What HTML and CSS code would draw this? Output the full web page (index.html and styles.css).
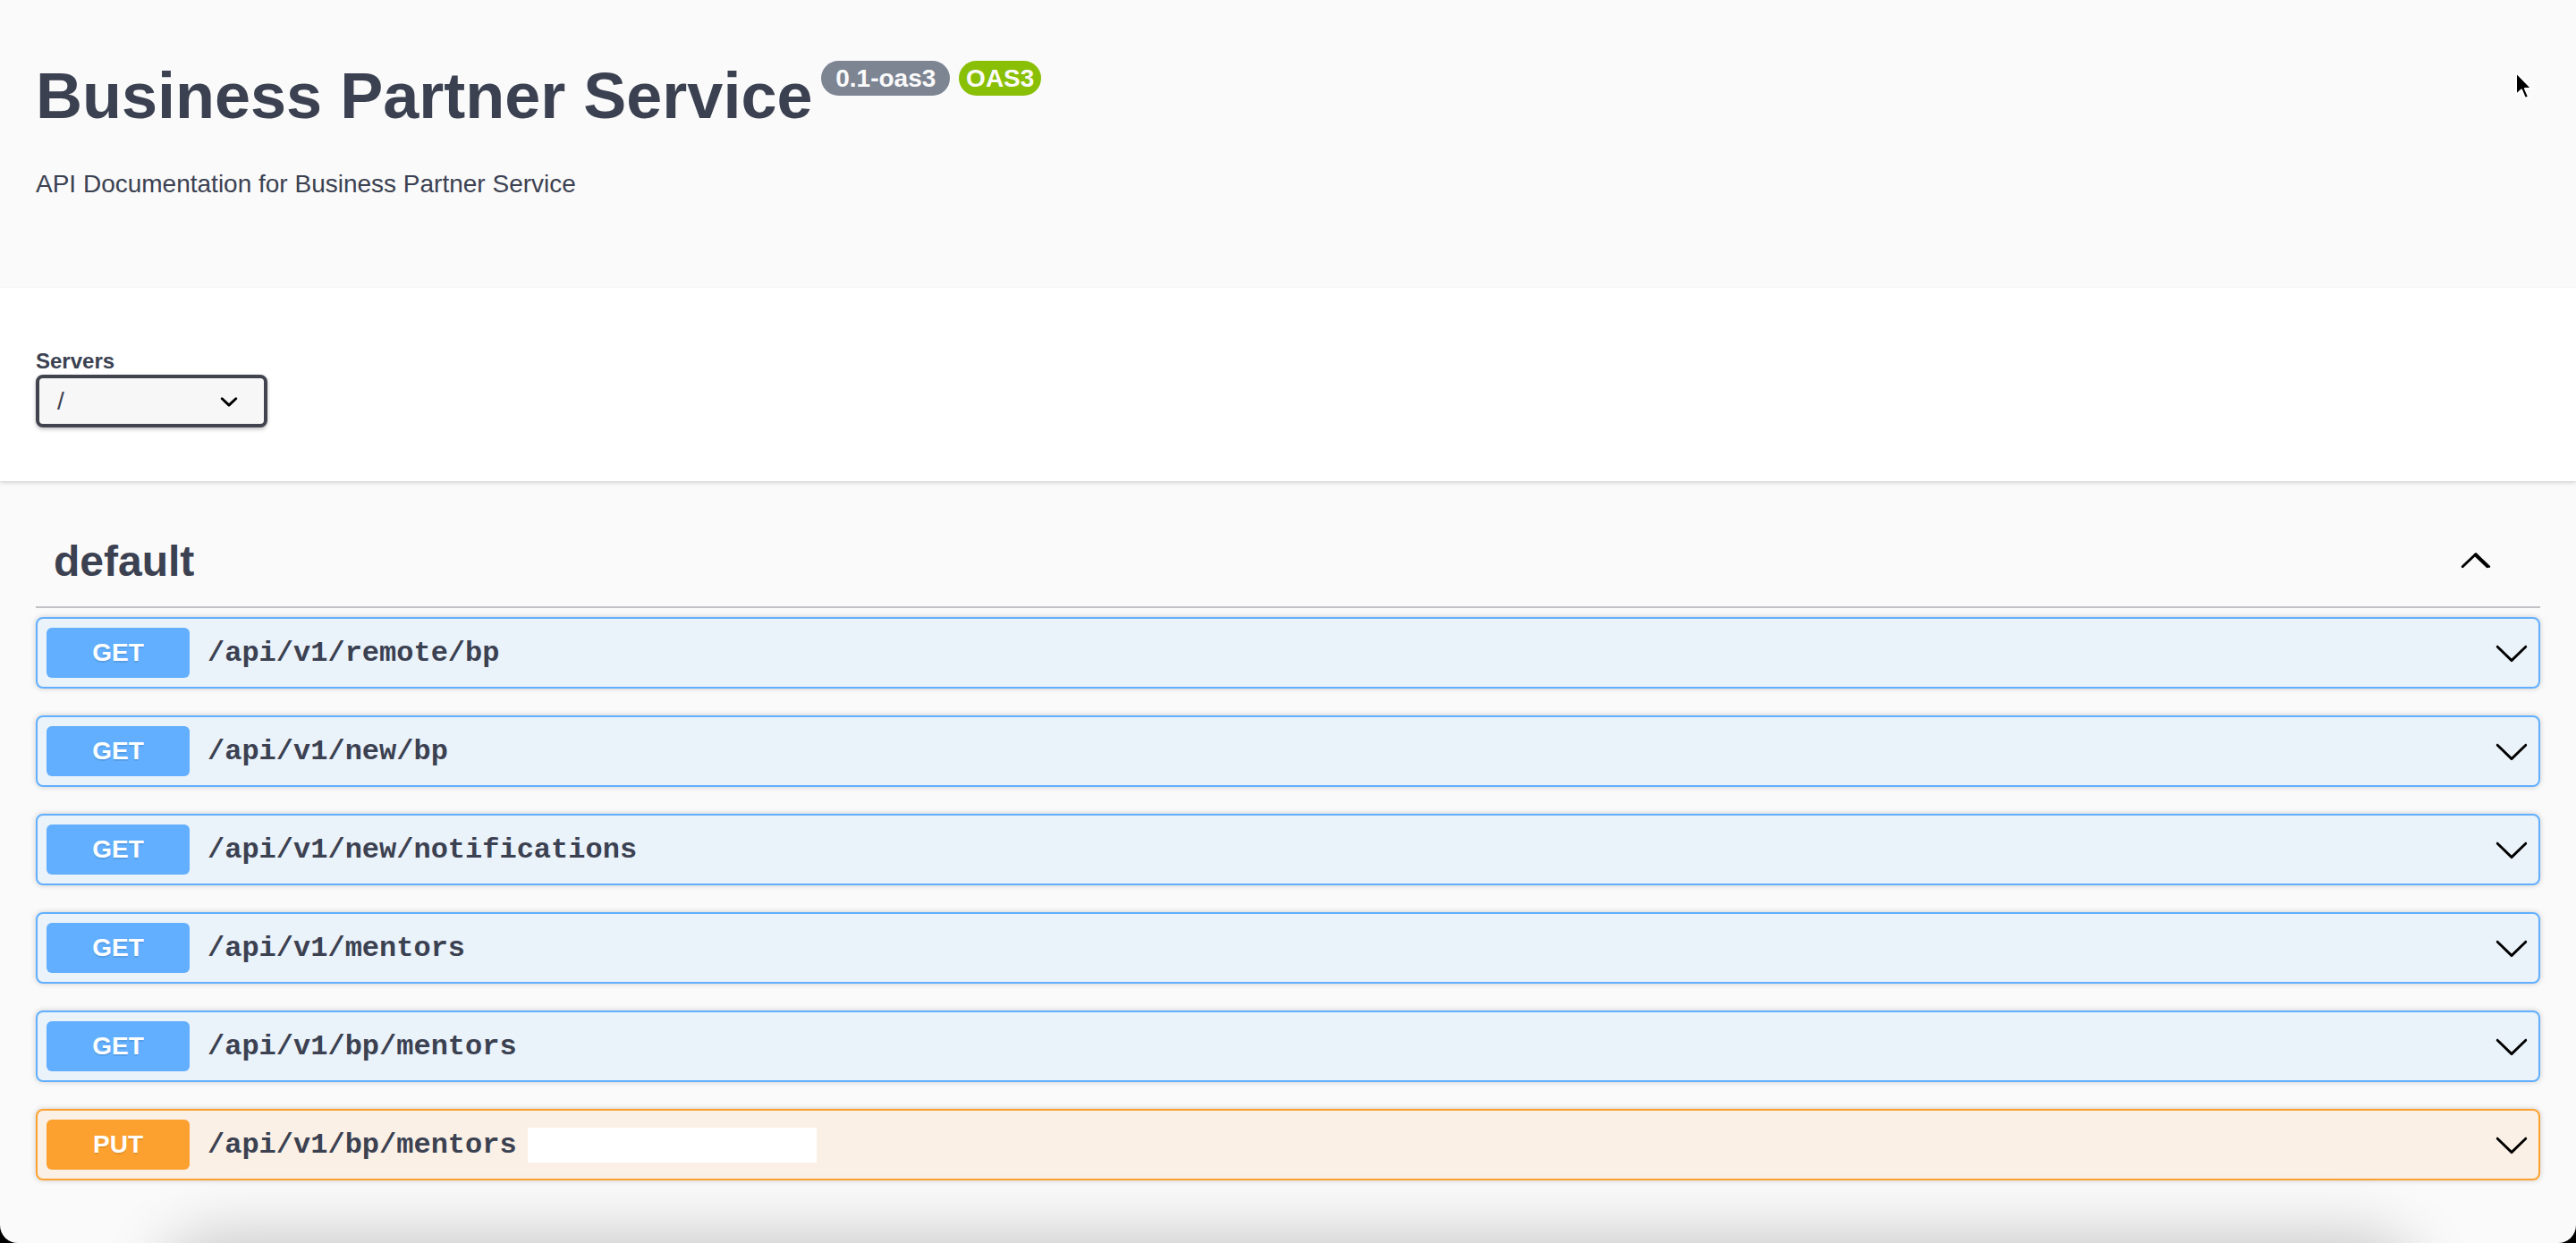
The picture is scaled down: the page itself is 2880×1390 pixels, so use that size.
FILE: index.html
```html
<!DOCTYPE html>
<html lang="en">
<head>
<meta charset="utf-8">
<title>Business Partner Service</title>
<link rel="stylesheet" href="styles.css">
</head>
<body>
<div class="window">
  <section class="info">
    <h2 class="title">
      <span class="title-text">Business Partner Service</span>
      <small class="badge badge-version"><span class="badge-text"> 0.1-oas3 </span></small>
      <small class="badge badge-stamp"><span class="badge-text">OAS3</span></small>
    </h2>
    <p class="description">API Documentation for Business Partner Service</p>
  </section>

  <section class="scheme">
    <div class="servers">
      <div class="servers-title">Servers</div>
      <div class="select">
        <span class="select-value">/</span>
        <svg class="select-arrow" viewBox="0 0 20 20" width="40" height="40" aria-hidden="true"><path d="M13.418 7.859a.695.695 0 0 1 .978 0 .68.68 0 0 1 0 .969l-3.908 3.83a.697.697 0 0 1-.979 0l-3.908-3.83a.68.68 0 0 1 0-.969.695.695 0 0 1 .978 0L10 11l3.418-3.141z"/></svg>
      </div>
    </div>
  </section>

  <section class="ops">
    <h3 class="tag">
      <span class="tag-name">default</span>
      <svg class="tag-arrow" viewBox="0 0 20 20" width="40" height="40" aria-hidden="true"><path d="M17.418 14.908c-.274.282-.657.305-.993 0L10 8.747l-6.425 6.161c-.336.305-.72.282-.993 0-.274-.282-.256-.757 0-1.007.256-.25 7.417-7.129 7.417-7.129a.696.696 0 0 1 .993 0s7.161 6.879 7.418 7.129c.256.25.274.725 0 1.007z"/></svg>
    </h3>

    <div class="opblock get">
      <span class="method">GET</span>
      <span class="path">/api/v1/remote/bp</span>
      <svg class="op-arrow" viewBox="0 0 20 20" width="40" height="40" aria-hidden="true"><path d="M17.418 6.109c.272-.268.709-.268.979 0s.271.701 0 .969l-7.908 7.83c-.27.268-.707.268-.979 0l-7.908-7.83c-.27-.268-.27-.701 0-.969.271-.268.709-.268.979 0L10 13.25l7.418-7.141z"/></svg>
    </div>
    <div class="opblock get">
      <span class="method">GET</span>
      <span class="path">/api/v1/new/bp</span>
      <svg class="op-arrow" viewBox="0 0 20 20" width="40" height="40" aria-hidden="true"><path d="M17.418 6.109c.272-.268.709-.268.979 0s.271.701 0 .969l-7.908 7.83c-.27.268-.707.268-.979 0l-7.908-7.83c-.27-.268-.27-.701 0-.969.271-.268.709-.268.979 0L10 13.25l7.418-7.141z"/></svg>
    </div>
    <div class="opblock get">
      <span class="method">GET</span>
      <span class="path">/api/v1/new/notifications</span>
      <svg class="op-arrow" viewBox="0 0 20 20" width="40" height="40" aria-hidden="true"><path d="M17.418 6.109c.272-.268.709-.268.979 0s.271.701 0 .969l-7.908 7.83c-.27.268-.707.268-.979 0l-7.908-7.83c-.27-.268-.27-.701 0-.969.271-.268.709-.268.979 0L10 13.25l7.418-7.141z"/></svg>
    </div>
    <div class="opblock get">
      <span class="method">GET</span>
      <span class="path">/api/v1/mentors</span>
      <svg class="op-arrow" viewBox="0 0 20 20" width="40" height="40" aria-hidden="true"><path d="M17.418 6.109c.272-.268.709-.268.979 0s.271.701 0 .969l-7.908 7.83c-.27.268-.707.268-.979 0l-7.908-7.83c-.27-.268-.27-.701 0-.969.271-.268.709-.268.979 0L10 13.25l7.418-7.141z"/></svg>
    </div>
    <div class="opblock get">
      <span class="method">GET</span>
      <span class="path">/api/v1/bp/mentors</span>
      <svg class="op-arrow" viewBox="0 0 20 20" width="40" height="40" aria-hidden="true"><path d="M17.418 6.109c.272-.268.709-.268.979 0s.271.701 0 .969l-7.908 7.83c-.27.268-.707.268-.979 0l-7.908-7.83c-.27-.268-.27-.701 0-.969.271-.268.709-.268.979 0L10 13.25l7.418-7.141z"/></svg>
    </div>
    <div class="opblock put">
      <span class="method">PUT</span>
      <span class="path">/api/v1/bp/mentors</span>
      <span class="summary-box"></span>
      <svg class="op-arrow" viewBox="0 0 20 20" width="40" height="40" aria-hidden="true"><path d="M17.418 6.109c.272-.268.709-.268.979 0s.271.701 0 .969l-7.908 7.83c-.27.268-.707.268-.979 0l-7.908-7.83c-.27-.268-.27-.701 0-.969.271-.268.709-.268.979 0L10 13.25l7.418-7.141z"/></svg>
    </div>
  </section>

  <div class="bottom-shadow"></div>
  <svg class="cursor" viewBox="0 0 22 34" width="22" height="34" aria-hidden="true"><path d="M2 2 L2 27 L8 21.5 L12 31 L16 29.3 L12 20 L19.5 20 Z" fill="#000" stroke="#fff" stroke-width="2" stroke-linejoin="round"/></svg>
</div>
</body>
</html>
```

FILE: styles.css
```css
html, body {
  margin: 0;
  padding: 0;
  background: #000;
}

body {
  font-family: "Liberation Sans", Arial, Helvetica, sans-serif;
  color: #3b4151;
}

.window {
  position: relative;
  height: 1390px;
  overflow: hidden;
  background: #fafafa;
  border-bottom-left-radius: 20px;
  border-bottom-right-radius: 20px;
}

/* ---------- info header ---------- */
.info {
  background: #fafafa;
  padding: 66px 40px 100px;
}

.title {
  display: flex;
  align-items: flex-start;
  margin: 0;
  font-size: 72px;
  line-height: 82px;
  font-weight: 700;
  color: #3b4151;
}

.badge {
  display: inline-block;
  margin: 2px 0 0 10px;
  padding: 4px 8px;
  border-radius: 114px;
  background: #7d8492;
  font-size: 28px;
  line-height: 31px;
  font-weight: 700;
  color: #fafafa;
}

.badge-stamp {
  background: #89bf04;
}

.badge-text {
  white-space: pre;
}

.description {
  margin: 42px 0 0;
  font-size: 28px;
  line-height: 32px;
  color: #3b4151;
}

/* ---------- servers ---------- */
.scheme {
  background: #fff;
  box-shadow: 0 2px 4px 0 rgba(0, 0, 0, 0.15);
  padding: 68px 40px 60px;
  margin-bottom: 40px;
  position: relative;
}

.servers-title {
  font-size: 24px;
  line-height: 28px;
  font-weight: 700;
  color: #3b4151;
  margin-bottom: 1px;
}

.select {
  box-sizing: border-box;
  width: 259px;
  height: 59px;
  display: flex;
  align-items: center;
  padding: 0 19px 0 20px;
  border: 4px solid #41444e;
  border-radius: 8px;
  background: #f7f7f7;
  box-shadow: 0 2px 4px 0 rgba(0, 0, 0, 0.25);
}

.select-value {
  font-size: 28px;
  font-weight: 400;
  color: #3b4151;
}

.select-arrow {
  margin-left: auto;
  fill: #000;
}

/* ---------- operations ---------- */
.ops {
  padding: 0 40px;
}

.tag {
  display: flex;
  align-items: center;
  margin: 0 0 10px;
  padding: 20px 40px 20px 20px;
  font-size: 48px;
  line-height: 60px;
  font-weight: 700;
  color: #3b4151;
  border-bottom: 2px solid rgba(59, 65, 81, 0.3);
}

.tag-arrow {
  margin-left: auto;
  margin-right: 13px;
  margin-top: -6px;
  fill: #000;
}

.opblock {
  display: flex;
  align-items: center;
  height: 80px;
  box-sizing: border-box;
  padding: 0 10px;
  margin-bottom: 30px;
  border: 2px solid #61affe;
  border-radius: 8px;
  background: rgba(97, 175, 254, 0.1);
  box-shadow: 0 0 6px rgba(0, 0, 0, 0.19);
}

.opblock.put {
  border-color: #fca130;
  background: rgba(252, 161, 48, 0.1);
}

.method {
  box-sizing: border-box;
  min-width: 160px;
  padding: 12px 0;
  border-radius: 6px;
  background: #61affe;
  color: #fff;
  font-size: 28px;
  line-height: 32px;
  font-weight: 700;
  text-align: center;
  text-shadow: 0 2px 0 rgba(0, 0, 0, 0.1);
}

.put .method {
  background: #fca130;
}

.path {
  padding: 0 20px;
  font-family: "Liberation Mono", "Courier New", monospace;
  font-size: 32px;
  font-weight: 700;
  color: #3b4151;
}

.summary-box {
  display: block;
  width: 323px;
  height: 39px;
  margin-left: -8px;
  background: #fff;
}

.op-arrow {
  margin-left: auto;
  fill: #000;
}

/* ---------- overlays ---------- */
.bottom-shadow {
  position: absolute;
  left: 200px;
  right: 200px;
  top: 1405px;
  height: 200px;
  background: #fff;
  border-radius: 40px;
  box-shadow: 0 0 70px 24px rgba(0, 0, 0, 0.2);
}

.cursor {
  position: absolute;
  left: 2811px;
  top: 79px;
}
```
